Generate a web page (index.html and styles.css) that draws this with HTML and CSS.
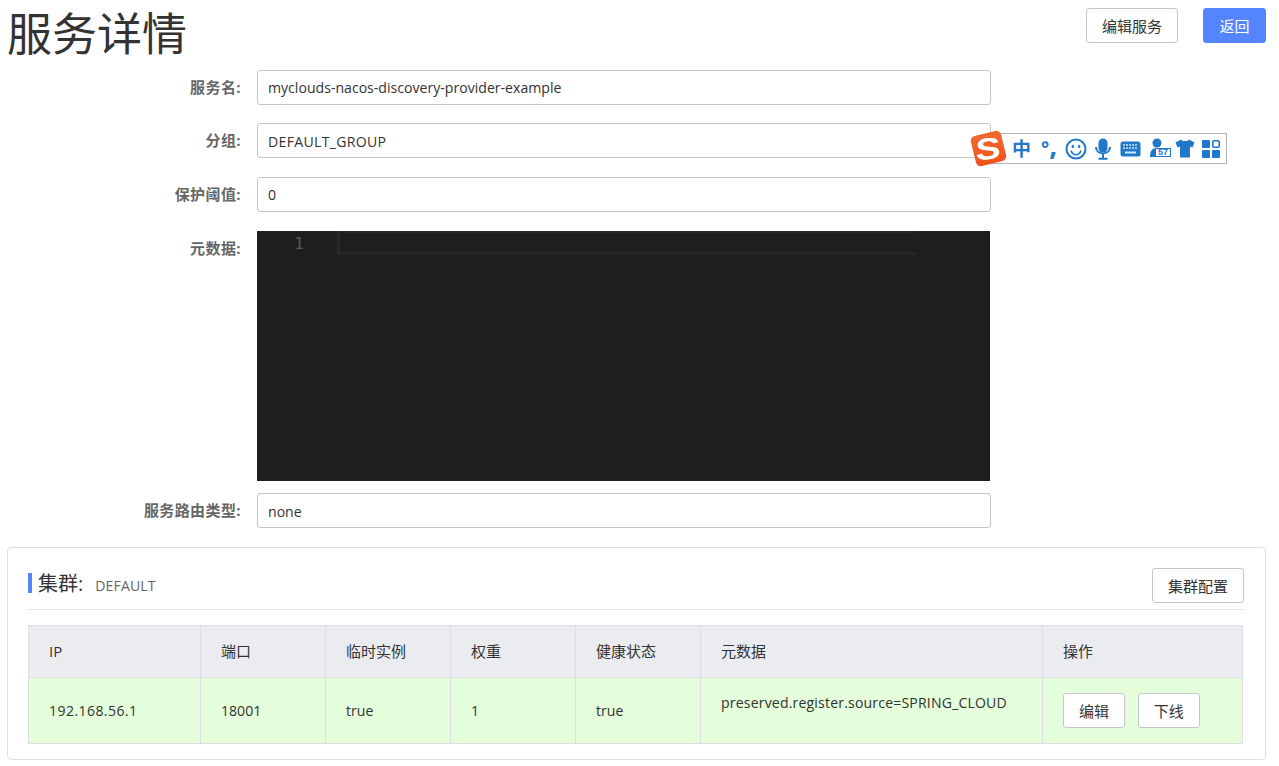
FILE: index.html
```html
<!DOCTYPE html>
<html lang="zh-CN">
<head>
    <meta charset="UTF-8">
    <title>服务详情</title>
    <link rel="stylesheet" href="styles.css">
</head>
<body>

    <div class="page-head">
        <h1 class="page-title">服务详情</h1>
        <div class="page-actions">
            <button class="btn">编辑服务</button>
            <button class="btn btn-primary">返回</button>
        </div>
    </div>

    <form class="service-form">
        <div class="form-row">
            <label class="form-label">服务名:</label>
            <div class="form-input">myclouds-nacos-discovery-provider-example</div>
        </div>
        <div class="form-row">
            <label class="form-label">分组:</label>
            <div class="form-input form-input-caps">DEFAULT_GROUP</div>
        </div>
        <div class="form-row">
            <label class="form-label">保护阈值:</label>
            <div class="form-input">0</div>
        </div>
        <div class="form-row form-row-editor">
            <label class="form-label">元数据:</label>
            <div class="editor">
                <div class="editor-gutter">1</div>
                <div class="editor-line"></div>
            </div>
        </div>
        <div class="form-row">
            <label class="form-label">服务路由类型:</label>
            <div class="form-input">none</div>
        </div>
    </form>

    <div class="cluster-card">
        <div class="cluster-head">
            <div class="cluster-title">
                <span class="cluster-name">集群:</span>
                <span class="cluster-value">DEFAULT</span>
            </div>
            <button class="btn">集群配置</button>
        </div>

        <table class="cluster-table">
            <colgroup>
                <col class="col-ip">
                <col class="col-mid">
                <col class="col-mid">
                <col class="col-mid">
                <col class="col-mid">
                <col class="col-meta">
                <col>
            </colgroup>
            <thead>
                <tr>
                    <th>IP</th>
                    <th>端口</th>
                    <th>临时实例</th>
                    <th>权重</th>
                    <th>健康状态</th>
                    <th>元数据</th>
                    <th>操作</th>
                </tr>
            </thead>
            <tbody>
                <tr>
                    <td class="cell-ip">192.168.56.1</td>
                    <td>18001</td>
                    <td>true</td>
                    <td>1</td>
                    <td>true</td>
                    <td class="cell-meta">preserved.register.source=SPRING_CLOUD</td>
                    <td class="cell-actions">
                        <button class="btn">编辑</button>
                        <button class="btn">下线</button>
                    </td>
                </tr>
            </tbody>
        </table>
    </div>

    <!-- 输入法状态栏 -->
    <div class="ime-bar">
        <div class="ime-logo"><span class="ime-logo-s">S</span></div>
        <span class="ime-zh">中</span>
        <span class="ime-punct"><span class="ime-degree">°</span><span class="ime-comma">,</span></span>
        <svg class="ime-smile" width="22" height="22" viewBox="0 0 22 22">
            <circle cx="11" cy="11" r="9.500" fill="none" stroke="#1f78c8" stroke-width="2"/>
            <ellipse cx="7.800" cy="8.500" rx="1.200" ry="1.700" fill="#1f78c8"/>
            <ellipse cx="14.200" cy="8.500" rx="1.200" ry="1.700" fill="#1f78c8"/>
            <path d="M6 12.500c1 3 3 4.200 5 4.200s4-1.200 5-4.200" fill="none" stroke="#1f78c8" stroke-width="1.600"/>
        </svg>
        <svg class="ime-mic" width="16" height="22" viewBox="0 0 16 22">
            <rect x="3.500" y="0.500" width="9" height="14" rx="4.500" fill="#1f78c8"/>
            <path d="M1 9c0 8.500 14 8.500 14 0M8 15.500v4.500M3.500 20.800h9" fill="none" stroke="#1f78c8" stroke-width="2"/>
        </svg>
        <svg class="ime-keys" width="21" height="16" viewBox="0 0 21 16">
            <rect x="0.500" y="0.500" width="20" height="15" rx="2.500" fill="#1f78c8"/>
            <path d="M3 4h15M3 7h15" fill="none" stroke="#d5e6f6" stroke-width="1.500" stroke-dasharray="2 1"/>
            <path d="M5 11.500h11" stroke="#d5e6f6" stroke-width="2"/>
        </svg>
        <div class="ime-user">
            <svg width="21" height="21" viewBox="0 0 21 21">
                <circle cx="7" cy="5" r="4.500" fill="#1f78c8"/>
                <path d="M0 19c0-6 2-9 7-9s7 3 7 9z" fill="#1f78c8"/>
            </svg>
            <span class="ime-badge">57</span>
        </div>
        <svg class="ime-shirt" width="20" height="19" viewBox="0 0 20 19">
            <path d="M6 0.500c1 2 7 2 8 0l5.500 3-2 5-2.500-1V18.500H5V7.500L2.500 8.500l-2-5z" fill="#1f78c8"/>
        </svg>
        <svg class="ime-grid" width="18" height="18" viewBox="0 0 18 18">
            <rect x="0" y="0" width="8" height="8" rx="1" fill="#1f78c8"/>
            <rect x="10.800" y="0.800" width="6.400" height="6.400" rx="1" fill="none" stroke="#1f78c8" stroke-width="1.600"/>
            <rect x="0" y="10" width="8" height="8" rx="1" fill="#1f78c8"/>
            <rect x="10" y="10" width="8" height="8" rx="1" fill="#1f78c8"/>
        </svg>
    </div>

</body>
</html>
```

FILE: styles.css
```css
* {
    box-sizing: border-box;
}

html, body {
    margin: 0;
    padding: 0;
}

body {
    font-family: "Open Sans", "Noto Sans CJK SC", sans-serif;
    font-size: 14.100px;
    color: #333;
    background-color: #fff;
    height: 766px;
    overflow: hidden;
    position: relative;
}

/* 顶部标题 */
.page-head {
    display: flex;
    justify-content: space-between;
    padding: 8px 13px 0 7px;
    height: 70px;
}

.page-title {
    margin: 0;
    font-size: 45px;
    font-weight: 400;
    line-height: 52px;
    color: #333;
}

.page-actions {
    display: flex;
    gap: 25px;
}

.btn {
    font-family: inherit;
    font-size: 15px;
    color: #333;
    height: 35px;
    padding: 0 15px 1px;
    background-color: #fff;
    border: 1px solid #c4c6cf;
    border-radius: 3px;
}

.btn-primary {
    min-width: 63px;
    background-color: #5584ff;
    border-color: #5584ff;
    color: #fff;
}

/* 表单 */
.service-form {
    height: 477px;
}

.form-row {
    display: flex;
    margin-bottom: 19px;
}

.form-row:first-child {
    margin-bottom: 18px;
}

.form-label {
    width: 241px;
    padding-top: 8px;
    line-height: 18px;
    font-size: 15px;
    letter-spacing: 0.400px;
    text-align: right;
    font-weight: 700;
    color: #666;
    flex-shrink: 0;
}

.form-input {
    width: 734px;
    height: 35px;
    margin-left: 16px;
    padding: 0 10px;
    line-height: 33px;
    border: 1px solid #c4c6cf;
    border-radius: 3px;
}

.form-input-caps {
    line-height: 35px;
    letter-spacing: 0.300px;
}

.form-row:last-child .form-input {
    line-height: 35px;
}

.form-row-editor {
    margin-bottom: 12px;
}

.form-row-editor .form-label {
    padding-top: 8px;
}

.editor {
    display: flex;
    width: 733px;
    height: 250px;
    margin-left: 16px;
    background-color: #1e1e1e;
}

.editor-gutter {
    width: 80px;
    padding-right: 33px;
    text-align: right;
    font-family: "DejaVu Sans Mono", monospace;
    font-size: 16px;
    line-height: 25px;
    color: #5a5a5a;
}

.editor-line {
    width: 578px;
    height: 24px;
    border: solid #282828;
    border-width: 2px 0 3px 3px;
}

/* 集群 */
.cluster-card {
    margin: 0 13px 0 7px;
    height: 213px;
    padding: 20px 21px 0 20px;
    border: 1px solid #dcdee3;
    border-radius: 4px;
}

.cluster-head {
    display: flex;
    justify-content: space-between;
    align-items: flex-start;
    height: 42px;
    border-bottom: 1px solid #e6e7eb;
    margin-bottom: 15px;
}

.cluster-title {
    display: flex;
    align-items: center;
    height: 20px;
    margin-top: 5px;
    padding-left: 6px;
    border-left: 4px solid #5584ff;
}

.cluster-name {
    padding-top: 2px;
    font-size: 20px;
    line-height: 20px;
    color: #333;
    margin-right: 12px;
}

.cluster-value {
    padding-top: 5px;
    color: #666;
    letter-spacing: 0.100px;
}

.cluster-table {
    width: 1215px;
    table-layout: fixed;
    border-collapse: collapse;
}

.col-ip { width: 172px; }
.col-mid { width: 125px; }
.col-meta { width: 342px; }

.cluster-table th,
.cluster-table td {
    padding: 0 20px;
    border: 1px solid #dcdee3;
    text-align: left;
    font-weight: 400;
}

.cluster-table th {
    height: 52px;
    padding-bottom: 2px;
    font-size: 15px;
    background-color: #ebecf0;
}

.cluster-table td {
    height: 66px;
    background-color: #e4fdda;
}

.cluster-table td.cell-ip {
    letter-spacing: 0.400px;
}

.cluster-table td.cell-meta {
    vertical-align: top;
    padding-top: 15px;
    line-height: 20px;
    letter-spacing: 0.160px;
}

.cell-actions .btn {
    margin-right: 9px;
}

/* 输入法状态栏 */
.ime-bar {
    position: absolute;
    left: 990px;
    top: 133px;
    width: 237px;
    height: 31px;
    display: flex;
    align-items: center;
    padding-left: 22px;
    background-color: #fff;
    border: 1px solid #b4b4b8;
    border-left: 0;
}

.ime-logo {
    position: absolute;
    left: -17px;
    top: -1px;
    width: 31px;
    height: 31px;
    border-radius: 5px;
    background: linear-gradient(#ee6a2e, #f4511e);
    transform: rotate(-14deg);
    text-align: center;
}

.ime-logo-s {
    display: inline-block;
    font-family: "Liberation Sans", sans-serif;
    font-weight: 700;
    font-size: 30px;
    line-height: 31px;
    color: #fff;
    transform: scaleX(1.250) rotate(10deg);
}

.ime-zh {
    font-size: 19px;
    font-weight: 700;
    line-height: 22px;
    color: #1f78c8;
}

.ime-punct {
    display: flex;
    width: 17px;
    height: 22px;
    margin-left: 10px;
    font-weight: 700;
    color: #1f78c8;
}

.ime-degree {
    font-size: 19px;
    line-height: 22px;
}

.ime-comma {
    margin-top: -5px;
    font-size: 28px;
    line-height: 22px;
}

.ime-smile { margin-left: 7px; }
.ime-mic { margin-left: 8px; }
.ime-keys { margin-left: 9px; }
.ime-shirt { margin-left: 4px; }
.ime-grid { margin-left: 7px; }

.ime-user {
    position: relative;
    width: 21px;
    height: 21px;
    margin-left: 9px;
}

.ime-badge {
    position: absolute;
    right: 0;
    bottom: 2px;
    width: 16px;
    height: 9px;
    font-family: "Liberation Sans", sans-serif;
    font-size: 9px;
    font-weight: 700;
    line-height: 7px;
    text-align: center;
    color: #1f78c8;
    background-color: #fff;
    border: 1px solid #1f78c8;
}
```
